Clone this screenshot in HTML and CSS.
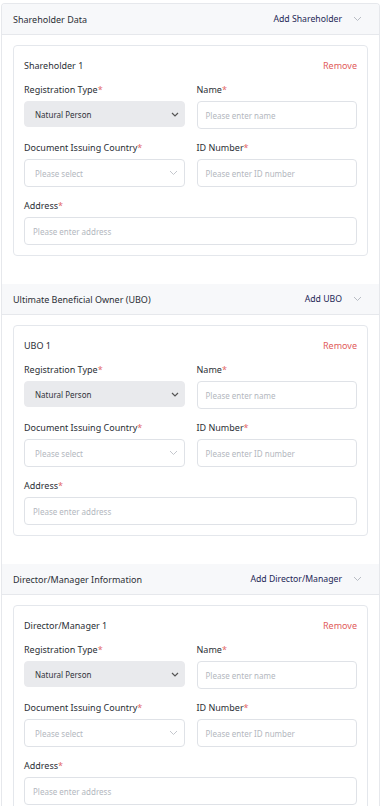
FILE: index.html
```html
<!DOCTYPE html>
<html lang="en">
<head>
    <meta charset="UTF-8">
    <meta name="viewport" content="width=device-width, initial-scale=1.0">
    <title>Company Parties</title>
    <link rel="stylesheet" href="styles.css">
</head>
<body>
    <div class="panel">
        <!-- Shareholders -->
        <div class="section">
            <div class="section-header">
                <span class="section-title">Shareholder Data</span>
                <div class="section-actions">
                    <span class="add-link">Add Shareholder</span>
                    <svg class="chevron" width="9" height="6" viewBox="0 0 9 6"><path d="M1 1l3.5 3.5L8 1" fill="none" stroke="#b8bcc4" stroke-width="1"/></svg>
                </div>
            </div>
            <div class="section-body">
                <div class="party-card">
                    <div class="card-head">
                        <span class="card-title">Shareholder 1</span>
                        <span class="remove-link">Remove</span>
                    </div>
                    <div class="form-grid">
                        <div class="field">
                            <label>Registration Type<span class="req">*</span></label>
                            <div class="select filled">
                                <span>Natural Person</span>
                                <svg width="8" height="5" viewBox="0 0 8 5"><path d="M1 1l3 3 3-3" fill="none" stroke="#555" stroke-width="1.2"/></svg>
                            </div>
                        </div>
                        <div class="field">
                            <label>Name<span class="req">*</span></label>
                            <div class="input">Please enter name</div>
                        </div>
                        <div class="field">
                            <label>Document Issuing Country<span class="req">*</span></label>
                            <div class="select">
                                <span>Please select</span>
                                <svg width="9" height="6" viewBox="0 0 9 6"><path d="M1 1l3.5 3.5L8 1" fill="none" stroke="#c4c7cd" stroke-width="1"/></svg>
                            </div>
                        </div>
                        <div class="field">
                            <label>ID Number<span class="req">*</span></label>
                            <div class="input">Please enter ID number</div>
                        </div>
                        <div class="field wide">
                            <label>Address<span class="req">*</span></label>
                            <div class="input">Please enter address</div>
                        </div>
                    </div>
                </div>
            </div>
        </div>

        <!-- UBO -->
        <div class="section">
            <div class="section-header">
                <span class="section-title">Ultimate Beneficial Owner (UBO)</span>
                <div class="section-actions">
                    <span class="add-link">Add UBO</span>
                    <svg class="chevron" width="9" height="6" viewBox="0 0 9 6"><path d="M1 1l3.5 3.5L8 1" fill="none" stroke="#b8bcc4" stroke-width="1"/></svg>
                </div>
            </div>
            <div class="section-body">
                <div class="party-card">
                    <div class="card-head">
                        <span class="card-title">UBO 1</span>
                        <span class="remove-link">Remove</span>
                    </div>
                    <div class="form-grid">
                        <div class="field">
                            <label>Registration Type<span class="req">*</span></label>
                            <div class="select filled">
                                <span>Natural Person</span>
                                <svg width="8" height="5" viewBox="0 0 8 5"><path d="M1 1l3 3 3-3" fill="none" stroke="#555" stroke-width="1.2"/></svg>
                            </div>
                        </div>
                        <div class="field">
                            <label>Name<span class="req">*</span></label>
                            <div class="input">Please enter name</div>
                        </div>
                        <div class="field">
                            <label>Document Issuing Country<span class="req">*</span></label>
                            <div class="select">
                                <span>Please select</span>
                                <svg width="9" height="6" viewBox="0 0 9 6"><path d="M1 1l3.5 3.5L8 1" fill="none" stroke="#c4c7cd" stroke-width="1"/></svg>
                            </div>
                        </div>
                        <div class="field">
                            <label>ID Number<span class="req">*</span></label>
                            <div class="input">Please enter ID number</div>
                        </div>
                        <div class="field wide">
                            <label>Address<span class="req">*</span></label>
                            <div class="input">Please enter address</div>
                        </div>
                    </div>
                </div>
            </div>
        </div>

        <!-- Directors / managers -->
        <div class="section">
            <div class="section-header">
                <span class="section-title">Director/Manager Information</span>
                <div class="section-actions">
                    <span class="add-link">Add Director/Manager</span>
                    <svg class="chevron" width="9" height="6" viewBox="0 0 9 6"><path d="M1 1l3.5 3.5L8 1" fill="none" stroke="#b8bcc4" stroke-width="1"/></svg>
                </div>
            </div>
            <div class="section-body">
                <div class="party-card">
                    <div class="card-head">
                        <span class="card-title">Director/Manager 1</span>
                        <span class="remove-link">Remove</span>
                    </div>
                    <div class="form-grid">
                        <div class="field">
                            <label>Registration Type<span class="req">*</span></label>
                            <div class="select filled">
                                <span>Natural Person</span>
                                <svg width="8" height="5" viewBox="0 0 8 5"><path d="M1 1l3 3 3-3" fill="none" stroke="#555" stroke-width="1.2"/></svg>
                            </div>
                        </div>
                        <div class="field">
                            <label>Name<span class="req">*</span></label>
                            <div class="input">Please enter name</div>
                        </div>
                        <div class="field">
                            <label>Document Issuing Country<span class="req">*</span></label>
                            <div class="select">
                                <span>Please select</span>
                                <svg width="9" height="6" viewBox="0 0 9 6"><path d="M1 1l3.5 3.5L8 1" fill="none" stroke="#c4c7cd" stroke-width="1"/></svg>
                            </div>
                        </div>
                        <div class="field">
                            <label>ID Number<span class="req">*</span></label>
                            <div class="input">Please enter ID number</div>
                        </div>
                        <div class="field wide">
                            <label>Address<span class="req">*</span></label>
                            <div class="input">Please enter address</div>
                        </div>
                    </div>
                </div>
            </div>
        </div>
    </div>
</body>
</html>
```

FILE: styles.css
```css
body {
    font-family: 'Noto Sans', 'Liberation Sans', sans-serif;
    margin: 0;
    padding: 0;
    background: #fff;
    color: #2b2f36;
}

.panel {
    margin: 3px 3px 0 1px;
    border: 1px solid #e6e8ec;
    border-bottom: none;
    border-radius: 4px 4px 0 0;
    overflow: hidden;
}

.section-header {
    display: flex;
    align-items: center;
    justify-content: space-between;
    height: 30px;
    padding: 0 17px 0 11px;
    background: #f7f8fa;
    border-bottom: 1px solid #e6e8ec;
}

.section-title {
    font-size: 9px;
    color: #2b2f36;
}

.section-actions {
    display: flex;
    align-items: center;
    gap: 11px;
}

.add-link {
    font-size: 8.7px;
    color: #1d2756;
}

.section-body {
    padding: 10px 11px 28px;
}

.party-card {
    border: 1px solid #e4e7ec;
    border-radius: 4px;
    padding: 10px;
}

.card-head {
    display: flex;
    align-items: center;
    justify-content: space-between;
    height: 18px;
    margin-bottom: 8px;
}

.card-title {
    font-size: 9px;
    color: #2b2f36;
}

.remove-link {
    font-size: 9px;
    color: #e15b5b;
}

.form-grid {
    display: grid;
    grid-template-columns: 1fr 1fr;
    column-gap: 12px;
    row-gap: 11px;
}

.field.wide {
    grid-column: 1 / -1;
}

.field label {
    display: block;
    font-size: 9px;
    line-height: 16px;
    margin-bottom: 3px;
    color: #2b2f36;
}

.req {
    color: #e36a6a;
}

.input,
.select {
    box-sizing: border-box;
    height: 28px;
    border: 1px solid #dfe2e7;
    border-radius: 4px;
    padding: 0 8px;
    font-size: 8px;
    color: #b3b7be;
    display: flex;
    align-items: center;
}

.select {
    justify-content: space-between;
    padding: 0 6px 0 10px;
}

.select.filled {
    height: 26px;
    background: #e9eaed;
    border-color: #e9eaed;
    color: #2f333a;
    padding-right: 5px;
}
```
